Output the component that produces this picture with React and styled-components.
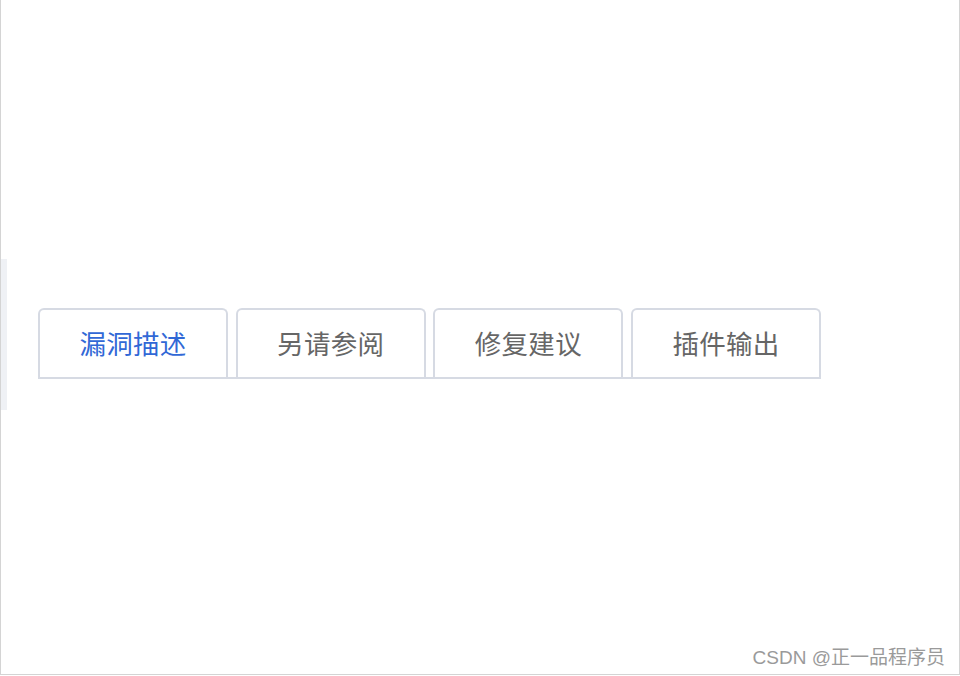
import React, { useState } from "react";
import styled, { createGlobalStyle } from "styled-components";

const GlobalStyle = createGlobalStyle`
  html, body { margin: 0; padding: 0; background: #ffffff; }
  body { font-family: "Noto Sans CJK SC", "Noto Sans", sans-serif; }
  * { box-sizing: border-box; }
`;

const Page = styled.div`
  width: 960px;
  height: 675px;
  border-left: 1px solid #d4d4d4;
  border-right: 1px solid #d4d4d4;
  border-bottom: 1px solid #d4d4d4;
  display: flex;
  flex-direction: column;
  padding-top: 259px;
  background: #ffffff;
`;

const Row = styled.div`
  display: flex;
  align-items: flex-start;
`;

const SideStrip = styled.div`
  width: 6px;
  height: 151px;
  background: #eff1f5;
`;

const TabBar = styled.div`
  margin-left: 31px;
  margin-top: 49px;
  display: flex;
  gap: 7.7px;
  border-bottom: 2px solid #d6dae3;
`;

const Tab = styled.button`
  width: 190px;
  height: 69px;
  border: 2px solid #d6dae3;
  border-bottom: none;
  border-radius: 6px 6px 0 0;
  background: #ffffff;
  padding: 0 0 2px;
  display: flex;
  align-items: center;
  justify-content: center;
  font-family: "Noto Sans CJK SC", sans-serif;
  font-size: 26.5px;
  letter-spacing: 0.3px;
  color: ${(p) => (p.$active ? "#3168d6" : "#666666")};
  cursor: pointer;
`;

const Watermark = styled.div`
  margin-top: auto;
  align-self: flex-end;
  padding: 0 14px 5px 0;
  font-family: "Liberation Sans", "Noto Sans CJK SC", sans-serif;
  font-size: 19px;
  color: #9a9a9a;
`;

const tabs = ["漏洞描述", "另请参阅", "修复建议", "插件输出"];

export default function App() {
  const [active, setActive] = useState(0);
  return (
    <>
      <GlobalStyle />
      <Page>
        <Row>
          <SideStrip />
          <TabBar>
            {tabs.map((t, i) => (
              <Tab key={t} $active={i === active} onClick={() => setActive(i)}>
                {t}
              </Tab>
            ))}
          </TabBar>
        </Row>
        <Watermark>CSDN @正一品程序员</Watermark>
      </Page>
    </>
  );
}
